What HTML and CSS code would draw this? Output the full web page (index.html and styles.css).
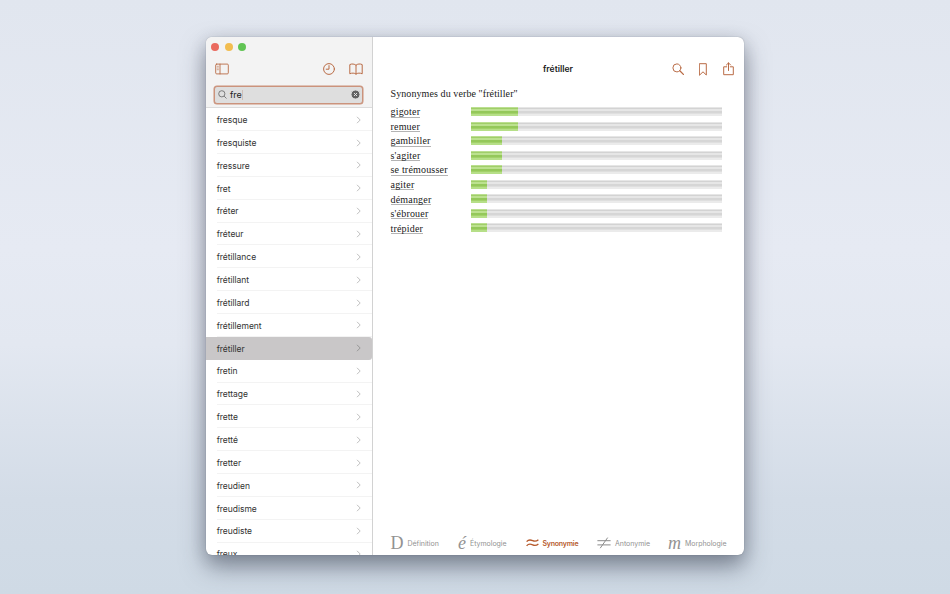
FILE: index.html
```
<!DOCTYPE html>
<html lang="fr">
<head>
<meta charset="utf-8">
<title>frétiller</title>
<link rel="stylesheet" href="styles.css">
</head>
<body>
<main class="window">
  <aside class="sidebar">
    <header class="side-head">
      <div class="lights"><i class="red"></i><i class="yellow"></i><i class="green"></i></div>
      <div class="side-tools">
        <svg class="icon panel-icon" width="14" height="12" viewBox="0 0 14 12"><rect x=".7" y="1.1" width="12.6" height="9.8" rx="1"/><path d="M5 1.1v9.8"/><path stroke-width=".6" d="M2.2 3.3h1.2M2.2 5h1.2M2.2 6.7h1.2"/></svg>
        <svg class="icon" width="12" height="12" viewBox="0 0 12 12"><circle cx="6" cy="6" r="5.4"/><path d="M6 2.6V6.2H3.2"/></svg>
        <svg class="icon book-icon" width="14" height="12" viewBox="0 0 14 12"><path d="M7 2.2C5.6.8 2.6.6.8 1.6v9.2C2.8 9.8 5.6 9.9 7 11.1 8.4 9.9 11.2 9.8 13.2 10.8V1.6C11.4.6 8.4.8 7 2.2v8.9"/></svg>
      </div>
      <div class="search">
        <svg class="lens" width="9" height="9" viewBox="0 0 9 9"><circle cx="3.8" cy="3.8" r="3.1"/><path d="M6.1 6.1l2.4 2.4"/></svg>
        <span class="query">fre</span><span class="caret"></span>
        <svg class="clear" width="9" height="9" viewBox="0 0 9 9"><circle cx="4.5" cy="4.5" r="4.5"/><path d="M3 3l3 3M6 3L3 6"/></svg>
      </div>
    </header>
    <ul class="words" id="words"></ul>
  </aside>
  <section class="content">
    <header class="topbar">
      <h1>frétiller</h1>
      <svg class="icon top-search" width="12" height="12" viewBox="0 0 12 12"><circle cx="4.9" cy="4.9" r="4"/><path d="M7.8 7.8l3.6 3.6" stroke-width="1.3"/></svg>
      <svg class="icon top-mark" width="8" height="13" viewBox="0 0 8 13"><path d="M.7.7h6.6v11.3L4 8.8.7 12z"/></svg>
      <svg class="icon top-share" width="11" height="14" viewBox="0 0 11 14"><path d="M3.7 4.8H.7v7.9h9.6V4.8h-3M5.5 8.5V.9M3.4 3l2.1-2.1L7.6 3"/></svg>
    </header>
    <h2>Synonymes du verbe "frétiller"</h2>
    <div class="synonyms" id="synonyms"></div>
    <nav class="tabs">
      <a class="tab-def"><span class="glyph">D</span><span class="label">Définition</span></a>
      <a class="tab-ety"><span class="glyph italic">é</span><span class="label">Étymologie</span></a>
      <a class="tab-syn active"><svg width="13" height="8" viewBox="0 0 13 8"><path d="M.6 2.7C3-.1 5 .9 6.7 1.7 8.7 2.6 10.4 2.5 12.4.7M.6 6.9C3 4.1 5 5.1 6.7 5.9 8.7 6.8 10.4 6.7 12.4 4.9"/></svg><span class="label">Synonymie</span></a>
      <a class="tab-ant"><svg width="14" height="12" viewBox="0 0 14 12"><path d="M.4 3.7h13.2M.4 7.9h13.2M3.2 11.2L10.7.6"/></svg><span class="label">Antonymie</span></a>
      <a class="tab-mor"><span class="glyph italic">m</span><span class="label">Morphologie</span></a>
    </nav>
  </section>
</main>
<script src="app.js"></script>
</body>
</html>
```
FILE: styles.css
```
* { box-sizing: border-box; }
body {
  margin: 0;
  height: 594px;
  overflow: hidden;
  padding: 37px 206px 0;
  background: linear-gradient(#e1e6ef 0%, #e6eaf3 42%, #e3e8f1 58%, #d3dce7 84%, #cfdae5 100%);
  font-family: Inter, "Liberation Sans", sans-serif;
  color: #333;
}
.window {
  display: flex;
  width: 538px;
  height: 518px;
  border-radius: 6px;
  overflow: hidden;
  background: #fff;
  box-shadow: 0 0 1px rgba(50, 58, 72, .55), 0 12px 24px rgba(55, 63, 80, .52), 0 3px 16px rgba(55, 63, 80, .18);
}
.sidebar { width: 167px; border-right: 1px solid #d2d2d2; flex: none; }
.side-head { height: 71.3px; background: #f3f3f3; border-bottom: 1px solid #dcdcdc; padding: 5.5px 9px 0 5px; }
.lights { display: flex; gap: 5.5px; height: 8px; }
.lights i { width: 8px; height: 8px; border-radius: 50%; }
.red { background: #ea6a5e; }
.yellow { background: #f2bd50; }
.green { background: #61c454; }
.icon { fill: none; stroke: #b96b45; stroke-width: 1; stroke-linejoin: round; stroke-linecap: round; flex: none; }
.side-tools { display: flex; align-items: center; height: 12px; margin-top: 12.5px; padding-left: 4px; }
.panel-icon { margin-right: 94px; stroke-width: .9; }
.book-icon { margin-left: 14px; }
.search {
  display: flex;
  align-items: center;
  width: 149px;
  height: 18px;
  margin: 10.5px 0 0 3px;
  padding: 0 1.5px;
  border: 1.5px solid #cb937c;
  box-shadow: 0 0 0 .5px #cb937c;
  border-radius: 3px;
  background: #dedede;
}
.lens { fill: none; stroke: #707070; stroke-width: .9; margin-left: 1px; }
.query { font-size: 9px; margin-left: 3.5px; line-height: 12px; color: #222; }
.caret { width: 1px; height: 10px; background: #cdbfb9; }
.clear { margin-left: auto; fill: #646464; stroke: #eee; stroke-width: .9; margin-right: .5px; }
.words { margin: 0; padding: 0; list-style: none; }
.words li { display: flex; height: 22.86px; align-items: center; padding-left: 10.7px; font-size: 8.5px; letter-spacing: -.03px; position: relative; }
.words li span { padding-top: .6px; }
.words li::after { content: ""; position: absolute; left: 10.5px; right: 0; bottom: 0; height: 1px; background: #f3f3f3; }
.words li.selected { background: #c9c7c8; border-radius: 0 3px 3px 0; }
.words li.selected::after { display: none; }
.words svg { margin: 0 11px 0 auto; fill: none; stroke: #b8b8b8; stroke-width: .9; }
.words .selected svg { stroke: #929292; }
.content { flex: 1; display: flex; flex-direction: column; min-width: 0; }
.topbar { display: flex; align-items: center; height: 14px; margin-top: 25px; }
h1 { margin: 0 0 0 170px; width: 34px; font-size: 8.6px; line-height: 14px; font-weight: 600; color: #202020; white-space: nowrap; }
.top-search { margin-left: 95px; }
.top-mark { margin-left: 15px; }
.top-share { margin-left: 15.5px; }
h2 { margin: 10.5px 0 0 17.5px; font: 10px/14px "Liberation Serif", serif; letter-spacing: .09px; color: #202020; white-space: nowrap; }
.synonyms { margin: 5.3px 0 0 17.5px; }
.syn-row { display: flex; height: 14.55px; }
.syn-name { width: 80.5px; margin-top: -1.5px; font: 10px/15px "Liberation Serif", serif; letter-spacing: .19px; color: #202020; white-space: nowrap; }
.syn-name span { display: inline-block; height: 13.3px; border-bottom: 1px solid #b4b4b4; }
.bar { width: 250.5px; height: 9px; margin-top: 1.2px; background: linear-gradient(#e6e6e6 0 1px, #d3d3d3 1px 2px, #e6e6e6 2px 4px, #d6d6d6 4px 6px, #dfdfdf 6px 7px, #ebebeb 7px); }
.fill { height: 100%; background: linear-gradient(#bbdf90 0 1px, #a0ce69 1px 2px, #bce18f 2px 4px, #94c85a 4px 6px, #a2d169 6px 7px, #b6df88 7px); }
.tabs { margin-top: auto; margin-bottom: 2px; height: 20px; display: flex; align-items: center; padding-left: 17.5px; font-size: 7px; color: #929292; }
.tabs a { display: flex; align-items: center; flex: none; height: 20px; white-space: nowrap; }
.tabs svg { fill: none; stroke: #8b8b8b; stroke-width: 1; flex: none; }
.glyph { font: 18px/20px "Liberation Serif", serif; }
.italic { font-style: italic; }
.tab-def, .tab-ety { width: 67.5px; }
.tab-syn { width: 71.5px; }
.tab-ant { width: 71px; }
.label { margin-left: 4px; letter-spacing: -.03px; padding-top: 1px; }
.tabs .active { color: #b65a2c; font-weight: 600; }
.active .label { letter-spacing: -.22px; }
.tabs .active svg { stroke: #b65a2c; stroke-width: 1.3; }
```
FILE: app.js
```
const words = ["fresque", "fresquiste", "fressure", "fret", "fréter", "fréteur", "frétillance", "frétillant", "frétillard", "frétillement", "frétiller", "fretin", "frettage", "frette", "fretté", "fretter", "freudien", "freudisme", "freudiste", "freux"];
document.getElementById("words").innerHTML = words.map(w =>
  `<li${w === "frétiller" ? ' class="selected"' : ""}><span>${w}</span><svg width="5" height="8" viewBox="0 0 5 8"><path d="M1 .8L4.2 4 1 7.2"/></svg></li>`).join("");

const synonyms = [["gigoter", 47], ["remuer", 47], ["gambiller", 31.3], ["s'agiter", 31.3], ["se trémousser", 31.3], ["agiter", 15.7], ["démanger", 15.7], ["s'ébrouer", 15.7], ["trépider", 15.7]];
document.getElementById("synonyms").innerHTML = synonyms.map(([name, w]) =>
  `<div class="syn-row"><div class="syn-name"><span>${name}</span></div><div class="bar"><div class="fill" style="width:${w}px"></div></div></div>`).join("");
```
